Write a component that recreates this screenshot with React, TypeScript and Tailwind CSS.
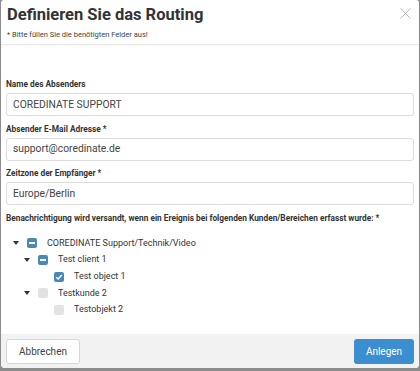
import React from 'react';
import { X } from 'lucide-react';

type Node = {
  label: string;
  level: number;
  state: 'partial' | 'checked' | 'empty';
  expandable: boolean;
};

const TREE: Node[] = [
  { label: 'COREDINATE Support/Technik/Video', level: 0, state: 'partial', expandable: true },
  { label: 'Test client 1', level: 1, state: 'partial', expandable: true },
  { label: 'Test object 1', level: 2, state: 'checked', expandable: false },
  { label: 'Testkunde 2', level: 1, state: 'empty', expandable: true },
  { label: 'Testobjekt 2', level: 2, state: 'empty', expandable: false },
];

// left offset of each tree level (level 2 leaves sit a bit deeper)
const INDENT = [7, 18, 34];

const Box = ({ state }: { state: Node['state'] }) => {
  if (state === 'empty') return <span className="w-[10px] h-[10px] rounded-[2px] bg-[#e2e2e2]" />;
  return (
    <span className="w-[10px] h-[10px] rounded-[2px] bg-[#4a88b6] flex items-center justify-center">
      {state === 'partial' ? (
        <span className="w-[6px] h-[2px] bg-white" />
      ) : (
        <svg width="8" height="8" viewBox="0 0 8 8">
          <path d="M1.2 4.2 L3.2 6 L6.8 2" stroke="white" strokeWidth="1.5" fill="none" />
        </svg>
      )}
    </span>
  );
};

const Field = ({ label, value }: { label: string; value: string }) => (
  <div className="flex flex-col">
    <label className="text-[8.3px] font-bold text-[#333] leading-[10px] mb-[4px]">{label}</label>
    <div className="h-[23px] border border-[#dcdcdc] rounded-[3px] px-[6px] flex items-center text-[10.3px] text-[#444]">
      {value}
    </div>
  </div>
);

export default function App() {
  return (
    <div className="w-[420px] h-[371px] bg-[#8c8c8c] px-[1px] pb-[3px] font-['Roboto',sans-serif]">
      <div className="h-full bg-white rounded-b-[4px] rounded-t-[3px] flex flex-col overflow-hidden">
        <div className="relative h-[45px] border-b border-[#e8e8e8] px-[6px] pt-[4px] shadow-[0_1px_2px_rgba(0,0,0,0.04)]">
          <h1 className="text-[16.5px] font-bold text-[#333] leading-[22px]">Definieren Sie das Routing</h1>
          <p className="text-[7.5px] text-[#444] leading-[10px] mt-[4px]">* Bitte füllen Sie die benötigten Felder aus!</p>
          <X size={19} strokeWidth={1} className="absolute right-[4px] top-[4px] text-[#a8a8a8]" />
        </div>
        <div className="flex-1 px-[5px] pt-[34px] flex flex-col gap-[7.5px]">
          <Field label="Name des Absenders" value="COREDINATE SUPPORT" />
          <Field label="Absender E-Mail Adresse *" value="support@coredinate.de" />
          <Field label="Zeitzone der Empfänger *" value="Europe/Berlin" />
          <div>
            <p className="text-[8.3px] font-bold text-[#333] leading-[10px]">
              Benachrichtigung wird versandt, wenn ein Ereignis bei folgenden Kunden/Bereichen erfasst wurde: *
            </p>
            <div className="mt-[12.5px] flex flex-col">
              {TREE.map((n) => (
                <div
                  key={n.label}
                  className="h-[16.7px] flex items-center text-[9px] text-[#333]"
                  style={{ paddingLeft: INDENT[n.level] }}
                >
                  <span className="w-[14px] flex items-center">
                    {n.expandable && (
                      <svg width="6" height="4" viewBox="0 0 6 4">
                        <path d="M0 0 L6 0 L3 4 Z" fill="#333" />
                      </svg>
                    )}
                  </span>
                  <Box state={n.state} />
                  <span className="ml-[10px]">{n.label}</span>
                </div>
              ))}
            </div>
          </div>
        </div>
        <div className="h-[34px] bg-[#f2f2f2] flex items-center justify-between px-[5px]">
          <button className="h-[25px] w-[74px] bg-white border border-[#d6d6d6] rounded-[3px] text-[10px] text-[#444]">
            Abbrechen
          </button>
          <button className="h-[25px] w-[60px] bg-[#3b8fd0] rounded-[3px] text-[10px] text-white">
            Anlegen
          </button>
        </div>
      </div>
    </div>
  );
}
